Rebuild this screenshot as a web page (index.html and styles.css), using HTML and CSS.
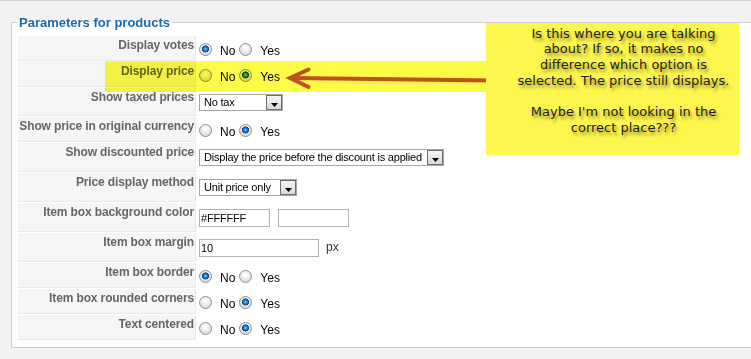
FILE: index.html
```html
<!DOCTYPE html>
<html>
<head>
<meta charset="utf-8">
<link rel="stylesheet" href="styles.css">
</head>
<body>
<fieldset class="adminform">
  <legend>Parameters for products</legend>
  <div class="params">
    <div class="key">Display votes</div>
    <div class="val opts"><span class="radio on"></span><span class="lbl">No</span><span class="radio"></span><span class="lbl">Yes</span></div>

    <div class="key">Display price</div>
    <div class="val opts"><span class="radio"></span><span class="lbl">No</span><span class="radio on"></span><span class="lbl">Yes</span></div>

    <div class="key mid">Show taxed prices</div>
    <div class="val ctl"><span class="sel w84"><span class="txt">No tax</span><span class="btn"><svg width="7" height="4" viewBox="0 0 7 4"><polygon points="0,0 7,0 3.5,4" fill="#000"/></svg></span></span></div>

    <div class="key">Show price in original currency</div>
    <div class="val opts"><span class="radio"></span><span class="lbl">No</span><span class="radio on"></span><span class="lbl">Yes</span></div>

    <div class="key tall">Show discounted price</div>
    <div class="val ctl"><span class="sel w245"><span class="txt">Display the price before the discount is applied</span><span class="btn"><svg width="7" height="4" viewBox="0 0 7 4"><polygon points="0,0 7,0 3.5,4" fill="#000"/></svg></span></span></div>

    <div class="key tall">Price display method</div>
    <div class="val ctl"><span class="sel w98"><span class="txt">Unit price only</span><span class="btn"><svg width="7" height="4" viewBox="0 0 7 4"><polygon points="0,0 7,0 3.5,4" fill="#000"/></svg></span></span></div>

    <div class="key tall">Item box background color</div>
    <div class="val ctl"><span class="inp w71">#FFFFFF</span><span class="inp w71 gap8"></span></div>

    <div class="key tall">Item box margin</div>
    <div class="val ctl"><span class="inp w120">10</span><span class="unit">px</span></div>

    <div class="key">Item box border</div>
    <div class="val opts"><span class="radio on"></span><span class="lbl">No</span><span class="radio"></span><span class="lbl">Yes</span></div>

    <div class="key">Item box rounded corners</div>
    <div class="val opts"><span class="radio"></span><span class="lbl">No</span><span class="radio on"></span><span class="lbl">Yes</span></div>

    <div class="key">Text centered</div>
    <div class="val opts"><span class="radio"></span><span class="lbl">No</span><span class="radio on"></span><span class="lbl">Yes</span></div>
  </div>
</fieldset>

<div class="highlight"></div>
<svg class="arrow" width="751" height="359" viewBox="0 0 751 359">
  <path d="M291 78 L494 80.5" stroke="#c0501d" stroke-width="4" fill="none" stroke-linecap="round"/>
  <path d="M308.5 69.5 L290 78 L308.5 87" stroke="#c0501d" stroke-width="4" fill="none" stroke-linecap="round" stroke-linejoin="miter"/>
</svg>
<div class="note">Is this where you are talking<br>about? If so, it makes no<br>difference which option is<br>selected. The price still displays.<br><br>Maybe I'm not looking in the<br>correct place???</div>
</body>
</html>
```
FILE: styles.css
```css
* { box-sizing: border-box; }
html, body { margin: 0; height: 359px; overflow: hidden; }
body {
  background: #f2f2f2;
  border-top: 1px solid #d0d0d0;
  font-family: "Liberation Sans", Arial, sans-serif;
  position: relative;
}
.adminform {
  margin: 14px 0 0 11px;
  width: 740px;
  border: 1px solid #cccccc;
  border-right: none;
  background: #ffffff;
  padding: 5px 0 6px 5px;
  min-width: 0;
  overflow: hidden;
}
.adminform legend {
  font-size: 13px;
  line-height: 15px;
  font-weight: bold;
  color: #1d6aa9;
  padding: 0 2px;
}
.params {
  display: grid;
  grid-template-columns: 178px 1fr;
  gap: 1px;
  padding: 1px 0 1px 1px;
}
.key {
  background: #f5f5f5;
  border-right: 1px solid #e9e9e9;
  border-bottom: 1px solid #e9e9e9;
  text-align: right;
  color: #666666;
  font-weight: bold;
  font-size: 12px;
  letter-spacing: -0.13px;
  line-height: 13px;
  padding: 3px 1px 0 0;
  height: 25px;
  white-space: nowrap;
}
.key.mid { height: 28px; }
.key.tall { height: 29px; }
.val {
  padding-left: 2px;
  font-size: 12px;
  color: #000;
  display: flex;
  align-items: flex-start;
}
.opts { padding-top: 7px; }
.ctl { padding-top: 6px; }
.radio {
  width: 13px;
  height: 13px;
  border-radius: 50%;
  border: 1px solid #8e8e8e;
  background: radial-gradient(circle at 50% 35%, #ffffff 0, #f0f0f0 35%, #cfcfcf 100%);
  flex: none;
}
.radio.on {
  background:
    radial-gradient(circle at 50% 45%, #7fd0fb 0, #2a86d2 1.6px, #0c4a8a 3px, #0c4a8a 3.3px, rgba(255,255,255,0) 3.8px),
    radial-gradient(circle at 50% 35%, #ffffff 0, #f0f0f0 35%, #cfcfcf 100%);
}
.lbl {
  margin: 2px 4px 0 8px;
  line-height: 13px;
}
.sel {
  display: flex;
  height: 17px;
  border: 1px solid #a6a6a6;
  background: #fff;
  font-size: 11px;
  letter-spacing: -0.2px;
}
.sel .txt {
  flex: 1;
  padding-left: 4px;
  line-height: 15px;
  white-space: nowrap;
}
.sel .btn {
  width: 16px;
  height: 15px;
  border: 1px solid #6e6e6e;
  background: linear-gradient(#f6f6f6, #d8d8d8);
  display: flex;
  align-items: flex-end;
  justify-content: center;
  padding-bottom: 2px;
}
.sel .btn svg { display: block; }
.w84 { width: 84px; }
.w245 { width: 245px; }
.w98 { width: 98px; }
.inp {
  display: block;
  height: 18px;
  border: 1px solid #b4b4b4;
  background: #fff;
  font-size: 11px;
  letter-spacing: -0.2px;
  line-height: 16px;
  padding-left: 1px;
  color: #000;
}
.w71 { width: 71px; }
.w120 { width: 120px; }
.gap8 { margin-left: 8px; }
.unit {
  margin-left: 7px;
  font-size: 12px;
  line-height: 16px;
  color: #333;
}
.highlight {
  position: absolute;
  left: 105px;
  top: 60px;
  width: 381px;
  height: 31px;
  background: #fbfb48;
  mix-blend-mode: multiply;
}
.arrow {
  position: absolute;
  left: 0;
  top: -1px;
  pointer-events: none;
}
.note {
  position: absolute;
  left: 486px;
  top: 22px;
  width: 253px;
  height: 132px;
  background: #fcf64f;
  padding: 2.5px 6px 0 28px;
  text-align: center;
  white-space: nowrap;
  font-family: "DejaVu Sans", Verdana, sans-serif;
  font-size: 13px;
  line-height: 15.67px;
  color: #1e1e1e;
  text-shadow: 2px 3px 3px rgba(70, 60, 0, 0.55);
}
```
